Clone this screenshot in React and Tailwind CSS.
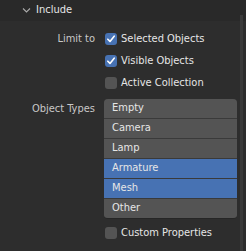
import { useState } from "react";

const font = { fontFamily: '"DejaVu Sans Condensed", "DejaVu Sans", sans-serif', fontStretch: 'condensed' };

function Check({ on, label }) {
    return (
        <div className="flex items-center h-[22px]">
            <div className={`ml-[1px] w-[12px] h-[12px] rounded-[3px] flex items-center justify-center ${on ? 'bg-[#4772b3]' : 'bg-[#545454]'}`}>
                {on && (
                    <svg width="10" height="10" viewBox="0 0 10 10">
                        <path d="M1.8 5.2 L4 7.4 L8.2 2.2" fill="none" stroke="#ffffff" strokeWidth="1.6" strokeLinecap="round" strokeLinejoin="round" />
                    </svg>
                )}
            </div>
            <span className="ml-[4px] text-[11px] text-[#e6e6e6] whitespace-nowrap">{label}</span>
        </div>
    );
}

export default function App() {
    const [types] = useState([
        { name: 'Empty', on: false },
        { name: 'Camera', on: false },
        { name: 'Lamp', on: false },
        { name: 'Armature', on: true },
        { name: 'Mesh', on: true },
        { name: 'Other', on: false },
    ]);

    return (
        <div className="w-[246px] h-[251px] bg-[#2d2d2d] flex flex-col overflow-hidden" style={font}>
            <div className="h-[21px] bg-[#292929] flex items-center pl-[22px] shrink-0">
                <svg width="9" height="9" viewBox="0 0 9 9">
                    <path d="M1 2.5 L4.5 6 L8 2.5" fill="none" stroke="#aaaaaa" strokeWidth="1.1" />
                </svg>
                <span className="ml-[5px] text-[11px] text-[#e6e6e6]">Include</span>
            </div>
            <div className="flex grow">
                <div className="grow flex flex-col pt-[7px]">
                    <div className="flex">
                        <div className="w-[95px] text-right text-[11px] text-[#c8c8c8] leading-[22px]">Limit to</div>
                        <div className="flex flex-col ml-[9px]">
                            <Check on label="Selected Objects" />
                            <Check on label="Visible Objects" />
                            <Check on={false} label="Active Collection" />
                        </div>
                    </div>
                    <div className="flex mt-[5px]">
                        <div className="w-[95px] text-right text-[11px] text-[#c8c8c8] leading-[19px] whitespace-nowrap">Object Types</div>
                        <div className="ml-[9px] w-[133px] rounded-[4px] overflow-hidden flex flex-col bg-[#3a3a3a] gap-[1px] border-b border-[#262626]">
                            {types.map(t => (
                                <div key={t.name} className={`h-[19px] flex items-center pl-[8px] text-[11px] text-[#e6e6e6] ${t.on ? 'bg-[#4772b3]' : 'bg-[#545454]'}`}>
                                    {t.name}
                                </div>
                            ))}
                        </div>
                    </div>
                    <div className="flex mt-[3px]">
                        <div className="w-[95px]" />
                        <div className="ml-[9px]">
                            <Check on={false} label="Custom Properties" />
                        </div>
                    </div>
                </div>
                <div className="w-[6px] shrink-0 flex">
                    <div className="w-[3px] bg-[#3a3a3a] mt-[-6px]" />
                </div>
            </div>
        </div>
    );
}
